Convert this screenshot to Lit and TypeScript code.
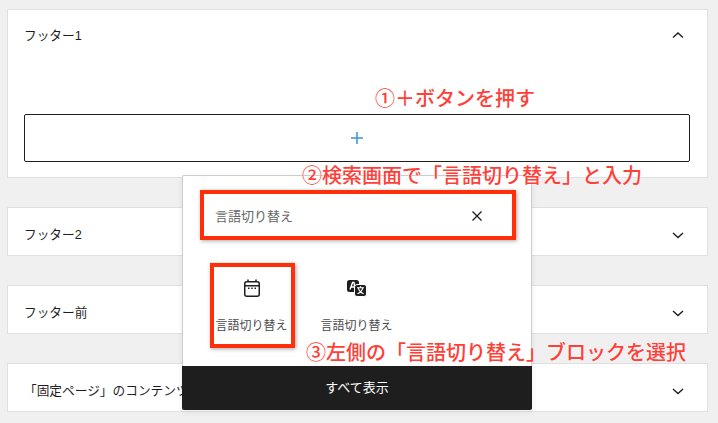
import { LitElement, html, css, svg } from "lit";
import { customElement } from "lit/decorators.js";

const up = svg`<svg class="chev" width="24" height="24" viewBox="0 0 24 24"><path d="M7 14.500 12 10l5 4.500" fill="none" stroke="#1e1e1e" stroke-width="1.400"/></svg>`;
const down = svg`<svg class="chev" width="24" height="24" viewBox="0 0 24 24"><path d="M17 10 12 14.500 7 10" fill="none" stroke="#1e1e1e" stroke-width="1.400"/></svg>`;

@customElement("app-root")
export class AppRoot extends LitElement {
  static styles = css`
    :host {
      display: block;
      position: relative;
      width: 718px;
      height: 423px;
      overflow: hidden;
      background: #f0f0f0;
      color: #1e1e1e;
      font-family: "Liberation Sans", "Noto Sans CJK JP", sans-serif;
      font-size: 13px;
    }
    .list { display: flex; flex-direction: column; gap: 29px; padding: 9px 10px 0 7px; }
    .card {
      box-sizing: border-box;
      height: 49px;
      background: #fff;
      border: 1px solid #e0e0e0;
      display: flex;
      align-items: center;
      justify-content: space-between;
      padding: 0 17px 0 16px;
      white-space: nowrap;
      font-size: 12.700px;
    }
    .card > span { padding-top: 3px; }
    .card > .chev { margin-top: 6px; }
    .card.open {
      height: 169px;
      display: block;
    }
    .head { height: 49px; display: flex; align-items: center; justify-content: space-between; }
    .chev { display: block; }
    .adder {
      box-sizing: border-box;
      height: 48px;
      margin-top: 55px;
      border: 1px solid #1e1e1e;
      border-radius: 2px;
      display: flex;
      align-items: center;
      justify-content: center;
    }
    .pop {
      position: absolute;
      left: 182px;
      top: 175px;
      width: 350px;
      height: 235px;
      box-sizing: border-box;
      background: #fff;
      border: 1px solid #ccc;
      border-bottom: 0;
      border-radius: 2px;
      box-shadow: 0 2px 6px rgba(0,0,0,.08);
      display: flex;
      flex-direction: column;
    }
    .search {
      margin: 15px 15px 0 17px;
      height: 50px;
      box-sizing: border-box;
      background: #fff;
      display: flex;
      align-items: center;
      justify-content: space-between;
      padding: 0 27px 0 15px;
      color: #666;
    }
    .search span { padding-bottom: 2px; }
    .results { flex: 1; display: flex; padding: 35px 0 0 26px; }
    .item { width: 85px; display: flex; flex-direction: column; align-items: center; gap: 16px; color: #4a4a4a; margin-right: 20px; white-space: nowrap; font-size: 12px; }
    .item svg { display: block; }
    .all {
      box-sizing: border-box;
      height: 44px;
      padding-bottom: 3px;
      background: #1e1e1e;
      color: #fff;
      display: flex;
      align-items: center;
      justify-content: center;
      border-radius: 0 0 2px 2px;
      margin: 0 -1px;
    }
    .box {
      position: absolute;
      box-sizing: border-box;
      border: 4px solid #ff2f0a;
      box-shadow: 1px 1px 4px rgba(0,0,0,.35);
    }
    .b1 { left: 200px; top: 190px; width: 316px; height: 50px; }
    .b2 { left: 210px; top: 263px; width: 85px; height: 85px; }
    .note {
      position: absolute;
      color: #ff4038;
      font-size: 20px;
      font-weight: 500;
      line-height: 24px;
      font-family: "Noto Sans CJK JP", sans-serif;
      white-space: nowrap;
      text-shadow: 0 0 2px #fff;
    }
    .n1 { left: 375px; top: 86px; }
    .n2 { left: 302px; top: 163px; }
    .n3 { left: 306px; top: 340px; }
  `;

  render() {
    return html`
      <div class="list">
        <div class="card open">
          <div class="head"><span>フッター1</span>${up}</div>
          <div class="adder">
            <svg width="24" height="24" viewBox="0 0 24 24"><path d="M12 6v12M6 12h12" fill="none" stroke="#3a95d0" stroke-width="1.500"/></svg>
          </div>
        </div>
        <div class="card"><span>フッター2</span>${down}</div>
        <div class="card"><span>フッター前</span>${down}</div>
        <div class="card"><span>「固定ページ」のコンテンツ</span>${down}</div>
      </div>
      <div class="pop">
        <div class="search">
          <span>言語切り替え</span>
          <svg width="24" height="24" viewBox="0 0 24 24"><path d="M7.500 7.500l9 9M16.500 7.500l-9 9" fill="none" stroke="#1e1e1e" stroke-width="1.300"/></svg>
        </div>
        <div class="results">
          <div class="item">
            <svg width="24" height="24" viewBox="0 0 24 24"><rect x="4.750" y="5.750" width="14.500" height="14.500" rx="2" fill="none" stroke="#1e1e1e" stroke-width="1.500"/><path d="M5 9.750h14M8 3.500v2.500M16 3.500v2.500" fill="none" stroke="#1e1e1e" stroke-width="1.500"/><path d="M8 11.500h1.500v1.500H8zM11.250 11.500h1.500v1.500h-1.500zM14.500 11.500H16v1.500h-1.500z" fill="#1e1e1e"/></svg>
            <span>言語切り替え</span>
          </div>
          <div class="item">
            <svg width="24" height="24" viewBox="0 0 24 24">
              <rect x="2" y="4" width="12" height="12" rx="2.500" fill="#1e1e1e"/>
              <path d="M5 13.500 7.600 6.500h1.400l1 7M6.300 11H9.800" fill="none" stroke="#fff" stroke-width="1.400"/>
              <rect x="9.500" y="8.500" width="12" height="12" rx="2.500" fill="#1e1e1e" stroke="#fff" stroke-width="1"/>
              <path d="M12 11.800h7M15.500 10.300v1.500M17.800 11.800c-.6 2.600-2.600 4.700-5.300 6M13.300 11.800c.6 2.600 2.600 4.700 5.300 6" fill="none" stroke="#fff" stroke-width="1.100"/>
            </svg>
            <span>言語切り替え</span>
          </div>
        </div>
        <div class="all">すべて表示</div>
      </div>
      <div class="box b1"></div>
      <div class="box b2"></div>
      <div class="note n1">①＋ボタンを押す</div>
      <div class="note n2">②検索画面で「言語切り替え」と入力</div>
      <div class="note n3">③左側の「言語切り替え」ブロックを選択</div>
    `;
  }
}
